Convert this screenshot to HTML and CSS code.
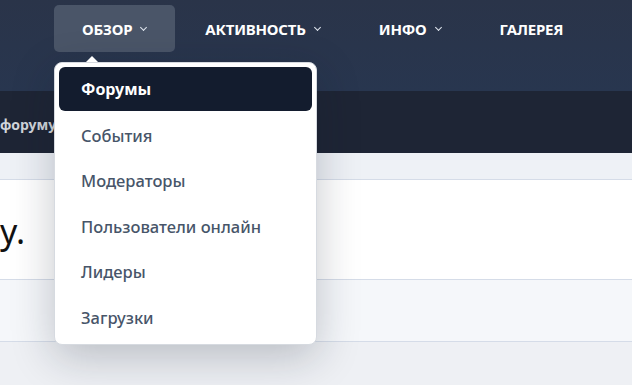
FILE: index.html
```html
<!DOCTYPE html>
<html>
<head>
    <title>Форум</title>
    <meta name="viewport" content="width=device-width, initial-scale=1.0">
    <link rel="stylesheet" href="styles.css">
</head>
<body>
    <header class="topbar">
        <ul class="nav">
            <li class="nav-item open">
                <a class="nav-link">Обзор <span class="chev"></span></a>
                <div class="menu">
                    <a class="menu-link active">Форумы</a>
                    <a class="menu-link">События</a>
                    <a class="menu-link">Модераторы</a>
                    <a class="menu-link">Пользователи онлайн</a>
                    <a class="menu-link">Лидеры</a>
                    <a class="menu-link">Загрузки</a>
                </div>
            </li>
            <li class="nav-item"><a class="nav-link">Активность <span class="chev"></span></a></li>
            <li class="nav-item"><a class="nav-link">Инфо <span class="chev"></span></a></li>
            <li class="nav-item"><a class="nav-link">Галерея</a></li>
        </ul>
    </header>

    <div class="subbar">
        <span class="crumb">форуму</span>
    </div>

    <div class="strip"></div>

    <div class="panel">
        <h1 class="title">у.</h1>
    </div>

    <div class="panel-foot"></div>
</body>
</html>
```

FILE: styles.css
```css
body {
    margin: 0;
    background-color: #eef0f4;
    font-family: "Noto Sans", "Open Sans", sans-serif;
    min-height: 100vh;
    overflow: hidden;
}

.topbar {
    height: 91px;
    background: linear-gradient(#2a3449, #28364f);
}

.nav {
    list-style-type: none;
    margin: 0;
    padding: 5px 0 0 54px;
    display: flex;
    gap: 2px;
}

.nav-item {
    position: relative;
}

.nav-link {
    display: flex;
    align-items: center;
    height: 47px;
    padding: 0 29px 0 28px;
    border-radius: 5px;
    color: white;
    font-size: 15px;
    font-weight: 700;
    text-transform: uppercase;
    letter-spacing: -0.2px;
}

.nav-item.open .nav-link {
    background-color: #4a5568;
}

.chev {
    width: 4px;
    height: 4px;
    margin-left: 9px;
    margin-top: -2px;
    border-right: 1.5px solid #e2e8f0;
    border-bottom: 1.5px solid #e2e8f0;
    transform: rotate(45deg);
}

.menu {
    position: absolute;
    top: 57px;
    left: 0;
    width: 253px;
    padding: 4px 4px 4px;
    background-color: white;
    border: 1px solid #d6dae0;
    border-radius: 8px;
    box-shadow: 0 12px 44px rgba(15, 23, 42, 0.24);
    z-index: 2;
}

.menu::before {
    content: "";
    position: absolute;
    top: -7px;
    left: 31px;
    border-left: 6px solid transparent;
    border-right: 6px solid transparent;
    border-bottom: 6px solid white;
}

.menu-link {
    display: flex;
    align-items: center;
    height: 45.5px;
    padding: 0 22px;
    border-radius: 6px;
    color: #475569;
    font-size: 16.5px;
    font-weight: 500;
}

.menu-link.active {
    height: 44px;
    margin-bottom: 1.5px;
    background-color: #131c2e;
    color: white;
    font-size: 16px;
    font-weight: 700;
}

.subbar {
    height: 62px;
    background-color: #1e2535;
    display: flex;
    align-items: center;
}

.crumb {
    color: #d1d5db;
    font-size: 14px;
    font-weight: 700;
    margin-top: 4px;
}

.strip {
    height: 26px;
    background-color: #eef1f6;
    border-bottom: 1px solid #d5dce8;
}

.panel {
    height: 99px;
    background-color: white;
    border-bottom: 1px solid #d5dce8;
    display: flex;
    align-items: center;
}

.title {
    margin: 2px 0 0;
    font-size: 34px;
    font-weight: 400;
    color: #111;
}

.panel-foot {
    height: 61px;
    background-color: #f5f7fa;
    border-bottom: 1px solid #d5dce8;
}
```
